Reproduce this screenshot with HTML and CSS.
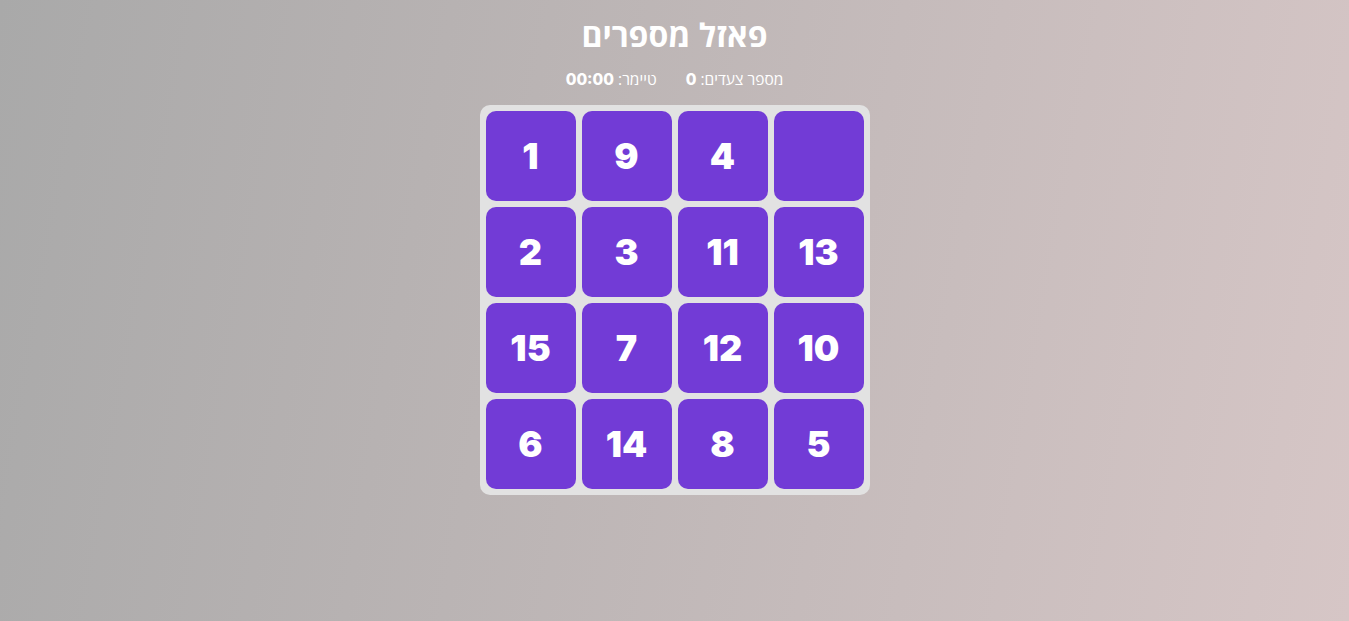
FILE: index.html
```html
<!DOCTYPE html>
<html lang="he" dir="rtl">
<head>
<meta charset="utf-8">
<title>פאזל מספרים</title>
<link rel="stylesheet" href="styles.css">
</head>
<body>
<main class="app">
  <h1 class="title">פאזל מספרים</h1>
  <div class="stats">
    <span class="stat">מספר צעדים: <b>0</b></span>
    <span class="stat">טיימר: <b>00:00</b></span>
  </div>
  <div class="board" dir="ltr">
    <div class="tile">1</div>
    <div class="tile">9</div>
    <div class="tile">4</div>
    <div class="tile"></div>
    <div class="tile">2</div>
    <div class="tile">3</div>
    <div class="tile">11</div>
    <div class="tile">13</div>
    <div class="tile">15</div>
    <div class="tile">7</div>
    <div class="tile">12</div>
    <div class="tile">10</div>
    <div class="tile">6</div>
    <div class="tile">14</div>
    <div class="tile">8</div>
    <div class="tile">5</div>
  </div>
</main>
</body>
</html>
```
FILE: styles.css
```css
html, body {
  margin: 0;
  height: 100%;
}
body {
  background: linear-gradient(100deg, #a9a9a9 0%, #d6c6c6 100%);
  font-family: "Open Sans", "Noto Sans", sans-serif;
  color: #fff;
}
.app {
  display: flex;
  flex-direction: column;
  align-items: center;
  padding-top: 13px;
}
.title {
  margin: 0;
  font-size: 32px;
  font-weight: 700;
  line-height: 44px;
}
.stats {
  display: flex;
  gap: 29px;
  margin-top: 11px;
  font-size: 15.5px;
  line-height: 22px;
}
.stat b {
  font-family: Inter, "Open Sans", sans-serif;
  font-weight: 800;
}
.board {
  margin-top: 14px;
  display: grid;
  grid-template-columns: repeat(4, 90px);
  grid-auto-rows: 90px;
  gap: 6px;
  padding: 6px;
  background: #e2e2e2;
  border-radius: 10px;
}
.tile {
  background: #723bd6;
  border-radius: 10px;
  display: flex;
  align-items: center;
  justify-content: center;
  font-family: Inter, "Open Sans", sans-serif;
  font-size: 36px;
  font-weight: 900;
  color: #fff;
}
```
